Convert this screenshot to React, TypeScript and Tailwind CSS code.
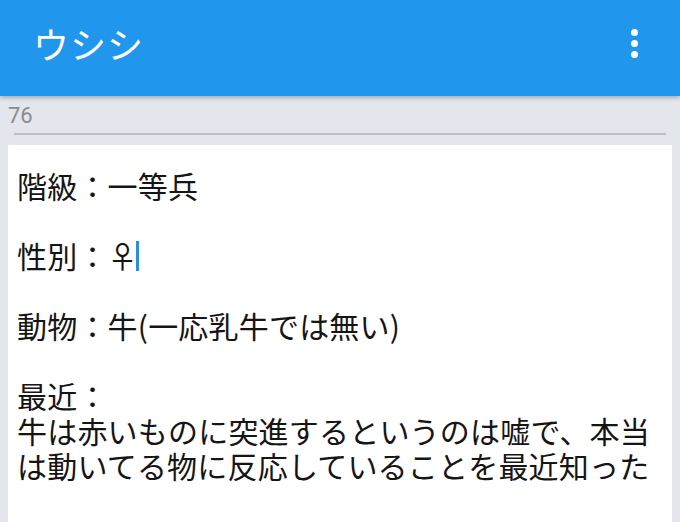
const jp = { fontFamily: '"Noto Sans CJK JP", "Noto Sans", sans-serif' };

export default function App() {
  return (
    <div className="w-[680px] h-[522px] overflow-hidden bg-[#e3e6ed] flex flex-col" style={jp}>
      <header className="h-[96px] shrink-0 bg-[#2196ed] flex items-center justify-between pl-[33px] pr-[42px] shadow-[0_2px_4px_rgba(0,0,0,0.25)] relative z-10">
        <h1 className="text-white text-[36px] leading-none tracking-[1px] -mt-[10px]">ウシシ</h1>
        <div className="flex flex-col gap-[4px] -mt-[10px]">
          <span className="w-[7px] h-[7px] rounded-full bg-white" />
          <span className="w-[7px] h-[7px] rounded-full bg-white" />
          <span className="w-[7px] h-[7px] rounded-full bg-white" />
        </div>
      </header>

      <div className="px-[8px] pt-[7px]">
        <div className="text-[22px] leading-[26px] text-[#8c8c8c] pb-[4px]" style={{ fontFamily: 'Roboto, "Noto Sans", sans-serif' }}>76</div>
        <div className="mx-[6px] h-[2px] bg-[#bcc0c7]" />
      </div>

      <div className="mx-[8px] mt-[10px] flex-1 bg-white pl-[9px] pr-[8px] pt-[23px] text-[30px] leading-[35px] tracking-[0.2px] text-[#151515]">
        <p>階級：一等兵</p>
        <p>&nbsp;</p>
        <p className="flex items-center">
          性別：♀<span className="inline-block w-[3px] h-[30px] bg-[#2a8fd8] -ml-[2px]" />
        </p>
        <p>&nbsp;</p>
        <p>動物：牛(一応乳牛では無い)</p>
        <p>&nbsp;</p>
        <p>最近：</p>
        <p>牛は赤いものに突進するというのは嘘で、本当は動いてる物に反応していることを最近知った</p>
      </div>
    </div>
  );
}
